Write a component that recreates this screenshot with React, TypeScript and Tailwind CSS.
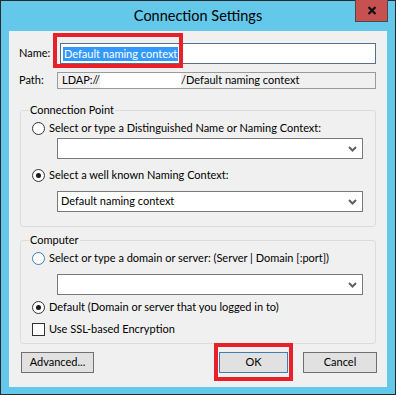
function Radio({ checked, hover }: { checked?: boolean; hover?: boolean }) {
  return (
    <span
      className={`flex h-[13px] w-[13px] shrink-0 items-center justify-center rounded-full border bg-white ${
        hover ? "border-[#3c7fb1]" : "border-[#333333]"
      }`}
    >
      {checked && <span className="h-[5px] w-[5px] rounded-full bg-[#1a1a1a]" />}
    </span>
  );
}

function Combo({ value, h = "h-[21px]" }: { value?: string; h?: string }) {
  return (
    <div className={`ml-[36px] flex w-[306px] items-center justify-between border border-[#7a7a7a] bg-white pl-[3px] pr-[5px] ${h}`}>
      <span>{value}</span>
      <svg width="9" height="6" viewBox="0 0 9 6">
        <path d="M1 1 L4.5 4.5 L8 1" fill="none" stroke="#606060" strokeWidth="2" />
      </svg>
    </div>
  );
}

function Group({ title, children }: { title: string; children: React.ReactNode }) {
  return (
    <div className="relative ml-[11px] w-[356px] rounded-[3px] border border-[#dcdcdc]">
      <span className="absolute -top-[9px] left-[8px] bg-[#f0f0f0] px-[1px] leading-[16px]">{title}</span>
      {children}
    </div>
  );
}

export default function App() {
  return (
    <div
      className="flex h-[395px] w-[396px] flex-col border border-[#2a2a2a] bg-[#63c8ea] text-[11px] text-black"
      style={{ fontFamily: 'Lato, "Noto Sans", sans-serif' }}
    >
      {/* title bar */}
      <div className="relative flex h-[30px] shrink-0 items-center justify-center">
        <span className="text-[14.5px] leading-none">Connection Settings</span>
        <div className="absolute right-[7px] top-[-1px] flex h-[22px] w-[33px] items-center justify-center border border-[#4a4a4a] border-t-0 bg-[#c75050]">
          <svg width="10" height="9" viewBox="0 0 10 9">
            <path d="M1.5 1 L8.5 8 M8.5 1 L1.5 8" stroke="#111" strokeWidth="2.2" />
          </svg>
        </div>
      </div>

      {/* client */}
      <div className="relative mx-[8px] flex h-[356px] flex-col bg-[#f0f0f0]">
        <div className="mt-[12px] flex h-[21px] items-center">
          <span className="ml-[10px] w-[41px]">Name:</span>
          <div className="flex h-[21px] w-[316px] items-center border border-[#56718e] bg-white pl-[2px]">
            <span className="bg-[#3399ff] px-[1px] leading-[14px] text-white">Default naming context</span>
          </div>
        </div>

        <div className="mt-[8px] flex h-[17px] items-center">
          <span className="ml-[10px] w-[38px]">Path:</span>
          <div className="flex h-[17px] w-[319px] items-center border border-[#9a9a9a] pl-[4px]">
            <span>LDAP://</span>
            <span className="h-[15px] w-[81px] bg-white" />
            <span>/Default naming context</span>
          </div>
        </div>

        <div className="mt-[21px]">
          <Group title="Connection Point">
            <div className="ml-[11px] mt-[9px] flex h-[16px] items-center gap-[4px]">
              <Radio />
              <span>Select or type a Distinguished Name or Naming Context:</span>
            </div>
            <div className="mt-[2px]">
              <Combo />
            </div>
            <div className="ml-[11px] mt-[8px] flex h-[16px] items-center gap-[4px]">
              <Radio checked />
              <span>Select a well known Naming Context:</span>
            </div>
            <div className="mb-[14px] mt-[8px]">
              <Combo value="Default naming context" />
            </div>
          </Group>
        </div>

        <div className="mt-[13px]">
          <Group title="Computer">
            <div className="ml-[11px] mt-[9px] flex h-[16px] items-center gap-[4px]">
              <Radio hover />
              <span className="whitespace-nowrap">Select or type a domain or server: (Server | Domain [:port])</span>
            </div>
            <div className="mt-[8px]">
              <Combo />
            </div>
            <div className="ml-[11px] mt-[4px] flex h-[16px] items-center gap-[4px]">
              <Radio checked />
              <span>Default (Domain or server that you logged in to)</span>
            </div>
            <div className="mb-[6px] ml-[11px] mt-[6px] flex h-[16px] items-center gap-[4px]">
              <span className="h-[13px] w-[13px] shrink-0 border border-[#333333] bg-white" />
              <span>Use SSL-based Encryption</span>
            </div>
          </Group>
        </div>

        <div className="mt-[8px] flex h-[21px]">
          <button className="ml-[12px] h-[21px] w-[73px] border border-[#707070] bg-[#e1e1e1] text-[11px]">Advanced...</button>
          <button className="ml-[125px] h-[21px] w-[69px] border border-[#3c7fb1] bg-[#e1e1e1] text-[11px]">OK</button>
          <button className="ml-[15px] h-[21px] w-[74px] border border-[#707070] bg-[#e1e1e1] text-[11px]">Cancel</button>
        </div>

        {/* red highlight boxes */}
        <div className="pointer-events-none absolute left-[44px] top-[2px] h-[35px] w-[130px] border-[4px] border-[#e8202a]" />
        <div className="pointer-events-none absolute left-[205px] top-[312px] h-[38px] w-[79px] border-[4px] border-[#e8202a]" />
      </div>
    </div>
  );
}
